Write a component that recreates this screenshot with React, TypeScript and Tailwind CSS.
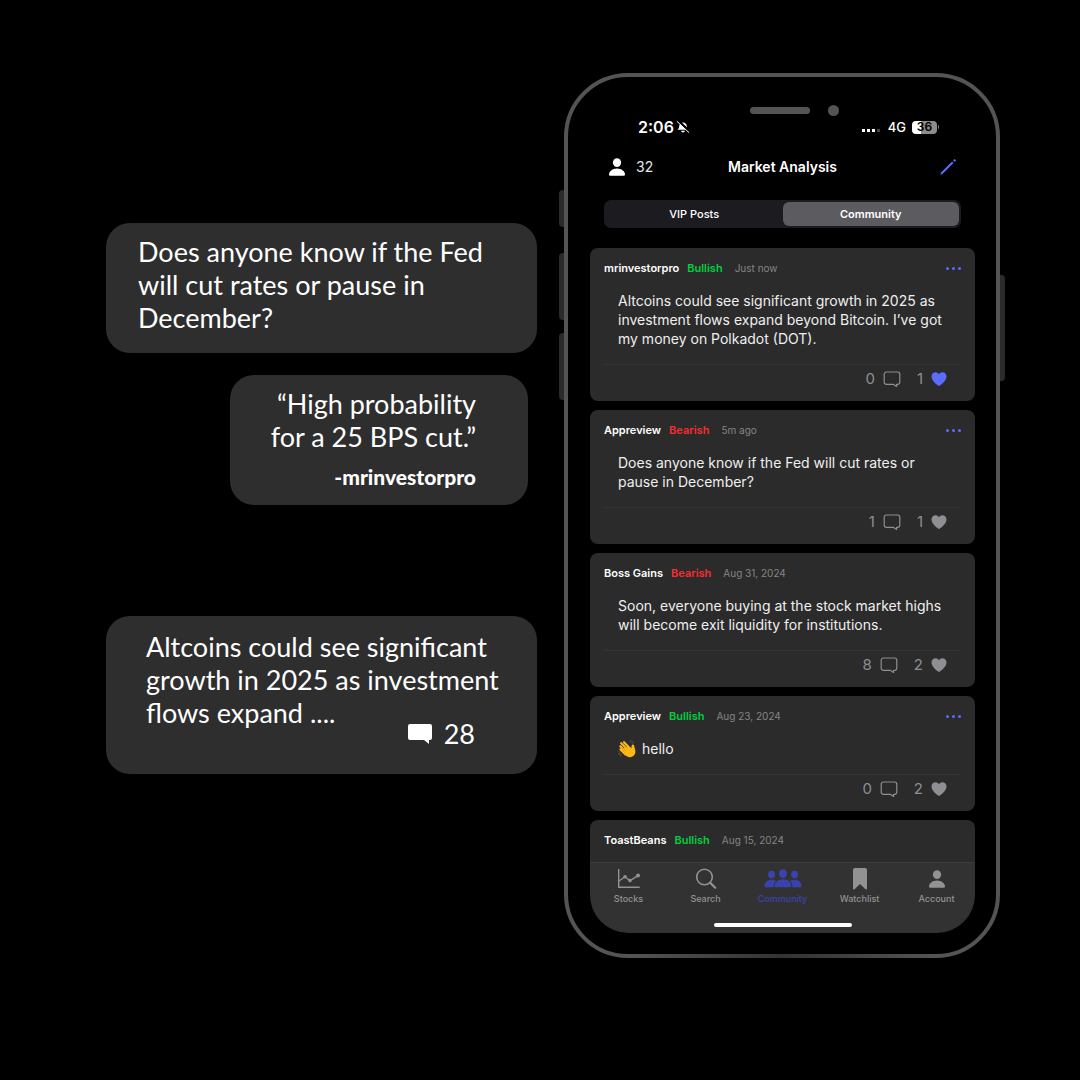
import React from "react";

type Mood = "Bullish" | "Bearish";

interface Post {
  author: string;
  mood: Mood;
  when: string;
  lines: string[];
  comments: number;
  likes: number;
  liked?: boolean;
  menu?: boolean;
  wave?: boolean;
}

const posts: Post[] = [
  {
    author: "mrinvestorpro",
    mood: "Bullish",
    when: "Just now",
    lines: [
      "Altcoins could see significant growth in 2025 as",
      "investment flows expand beyond Bitcoin. I’ve got",
      "my money on Polkadot (DOT).",
    ],
    comments: 0,
    likes: 1,
    liked: true,
    menu: true,
  },
  {
    author: "Appreview",
    mood: "Bearish",
    when: "5m ago",
    lines: ["Does anyone know if the Fed will cut rates or", "pause in December?"],
    comments: 1,
    likes: 1,
    menu: true,
  },
  {
    author: "Boss Gains",
    mood: "Bearish",
    when: "Aug 31, 2024",
    lines: ["Soon, everyone buying at the stock market highs", "will become exit liquidity for institutions."],
    comments: 8,
    likes: 2,
  },
  {
    author: "Appreview",
    mood: "Bullish",
    when: "Aug 23, 2024",
    lines: ["hello"],
    comments: 0,
    likes: 2,
    menu: true,
    wave: true,
  },
];

function PersonIcon({ className }: { className?: string }) {
  return (
    <svg viewBox="0 0 18 18" className={className} fill="currentColor" aria-hidden="true">
      <ellipse cx="9" cy="4.6" rx="4.1" ry="4.4" />
      <path d="M1 16.6C1 13.6 4.4 10.6 9 10.6s8 3 8 6c0 .8-.5 1.2-1.3 1.2H2.3C1.500 17.800 1 17.400 1 16.600Z" />
    </svg>
  );
}

function BubbleIcon() {
  return (
    <svg viewBox="0 0 18 16" className="h-4 w-[18px]" fill="none" stroke="currentColor" strokeWidth="1.2" strokeLinejoin="round" aria-hidden="true">
      <path d="M3.400 1h11.200A2.200 2.200 0 0 1 16.800 3.200v8a2.200 2.200 0 0 1-2.200 2.200h-1v2l-3-2H3.400a2.200 2.200 0 0 1-2.200-2.200V3.200A2.200 2.200 0 0 1 3.400 1Z" />
    </svg>
  );
}

function HeartIcon() {
  return (
    <svg viewBox="0 0 16 14" className="h-3.5 w-4" fill="currentColor" aria-hidden="true">
      <path d="M8 14C7.300 14 .5 9.400.5 4.600.5 2 2.300.2 4.500.2 6 .2 7.300 1 8 2.300 8.700 1 10 .2 11.500.2c2.200 0 4 1.800 4 4.400C15.500 9.400 8.700 14 8 14Z" />
    </svg>
  );
}

function WaveIcon() {
  return (
    <svg viewBox="0 0 18 18" className="h-[18px] w-[18px]" role="img" aria-label="Waving hand">
      <g fill="none" stroke="#545454" strokeLinecap="round" strokeWidth="0.9">
        <path d="M12 1.400c1.200.4 2 1.100 2.500 2.100M13 .4c1.200.4 2.200 1.200 2.700 2.300M1 11.500c.3 1.500 1.300 2.700 2.700 3.400M.4 13.300c.5 1.300 1.300 2.200 2.500 2.800" />
      </g>
      <g stroke="#fdb913" strokeLinecap="round" strokeWidth="2.200">
        <path d="M3.200 3.200 9.500 9.500M6 2.200l6 6.300M2.300 6.300l6 6M2.500 9.400l5 5" />
      </g>
      <path d="M6 7.500 11.800 7l1.400 1.400c.4-1 .2-2.300.7-3.300.4-.9 1.900-.8 2.100.2.3 1.600 1.600 4.700 1.400 6.800-.2 3-2.600 5.200-5.400 5.200-2.400 0-4-1.700-5.500-3.200Z" fill="#fdb913" />
      <path d="m5 4.500 4.300 4.400M4 7.400l4 4M4.200 10.400l3 3" stroke="#d18407" strokeWidth="0.500" />
    </svg>
  );
}

function PostHeader({ author, mood, when, menu }: { author: string; mood: Mood; when: string; menu?: boolean }) {
  return (
    <header className="flex h-4 items-center text-[11px] leading-4 font-semibold">
      <strong className="font-semibold text-white">{author}</strong>
      <span className={mood === "Bullish" ? "ml-2 text-[#00d03f]" : "ml-2 text-[#fb2c2f]"}>{mood}</span>
      <time className="ml-3 text-[10px] font-normal text-[#858585]">{when}</time>
      {menu && (
        <button type="button" aria-label="Post options" className="ml-auto flex gap-[3px] text-[#5b6cff]">
          <i className="size-[3px] rounded-full bg-current" />
          <i className="size-[3px] rounded-full bg-current" />
          <i className="size-[3px] rounded-full bg-current" />
        </button>
      )}
    </header>
  );
}

function PostCard({ post }: { post: Post }) {
  return (
    <article className="rounded-lg bg-[#2b2b2b] px-3.5 pt-3 pb-3.5">
      <PostHeader author={post.author} mood={post.mood} when={post.when} menu={post.menu} />
      <p className="mt-[15px] pl-3.5 text-sm leading-[19px] whitespace-nowrap text-[#efefef]">
        {post.wave ? (
          <span className="flex items-center gap-1.5">
            <WaveIcon />
            {post.lines[0]}
          </span>
        ) : (
          post.lines.map((line) => (
            <span key={line} className="block">
              {line}
            </span>
          ))
        )}
      </p>
      <footer className="mt-4 flex items-center justify-end border-t border-[#343434] pt-1.5 pr-3.5 text-[15px] leading-4 text-[#8e8e93]">
        <button type="button" aria-label="Comments" className="flex h-4 items-center gap-2">
          {post.comments}
          <BubbleIcon />
        </button>
        <button type="button" aria-label="Likes" className="ml-4 flex h-4 items-center gap-2">
          {post.likes}
          <span className={post.liked ? "text-[#5b6cff]" : ""}>
            <HeartIcon />
          </span>
        </button>
      </footer>
    </article>
  );
}

function StatusBar() {
  return (
    <div className="flex h-5 items-center pr-9 pl-12 text-white">
      <span className="text-base leading-5 font-semibold">2:06</span>
      <svg viewBox="0 0 14 14" className="ml-0.5 size-3.5" aria-label="Silent mode">
        <path d="M1.500 9.800c1.300-1 1.500-2 1.700-3.600C3.500 3.900 5 2.600 7 2.600s3.500 1.300 3.800 3.600c.2 1.600.4 2.600 1.700 3.600Z" fill="#fff" />
        <path d="M5 10.700h4c-.3 1.100-1.100 1.700-2 1.700s-1.700-.6-2-1.700Z" fill="#fff" />
        <path d="m2 .5 12 11.500" stroke="#000" strokeWidth="2.500" />
        <path d="m.8 1.200 12.400 11.600" stroke="#fff" strokeWidth="1" />
      </svg>
      <span className="mb-[5px] ml-auto flex gap-0.5 self-end">
        <i className="size-[3px] bg-white" />
        <i className="size-[3px] bg-white" />
        <i className="size-[3px] bg-white" />
        <i className="size-[3px] bg-[#444]" />
      </span>
      <span className="ml-2 text-[13px] leading-5 font-medium">4G</span>
      <span className="ml-1.5 flex h-[13px] w-[25px] items-center justify-center rounded-sm bg-linear-to-r from-white from-36% to-[#8c8c8c] to-36% text-xs font-semibold text-black">
        36
      </span>
      <i className="ml-px h-1 w-px rounded-r bg-[#7c7c7c]" />
    </div>
  );
}

function StocksIcon() {
  return (
    <svg viewBox="0 0 24 22" className="h-[22px] w-6" fill="none" stroke="currentColor" strokeWidth="1.400" aria-hidden="true">
      <path d="M1.700 1v18.200h21M2 13l6-4.200 5 3.900 8-5" />
      <g fill="currentColor" stroke="none">
        <circle cx="8" cy="8.800" r="1.800" />
        <circle cx="13" cy="12.600" r="1.800" />
        <circle cx="21" cy="7.600" r="2" />
      </g>
    </svg>
  );
}

function SearchIcon() {
  return (
    <svg viewBox="0 0 22 22" className="size-[22px]" fill="none" stroke="currentColor" strokeLinecap="round" aria-hidden="true">
      <circle cx="9.500" cy="9" r="7.800" strokeWidth="1.600" />
      <path d="m15.200 14.700 5 5" strokeWidth="2.200" />
    </svg>
  );
}

function CommunityIcon() {
  return (
    <svg viewBox="0 0 38 22" className="h-[22px] w-[38px]" fill="currentColor" aria-hidden="true">
      <ellipse cx="7.500" cy="6.500" rx="3.500" ry="3.800" />
      <ellipse cx="30.500" cy="6.500" rx="3.500" ry="3.800" />
      <ellipse cx="19" cy="5.600" rx="4" ry="4.300" />
      <path d="M.5 18c0-3.600 3-6.300 7-6.300 1.900 0 3.400.5 4.600 1.400-1.900 1.500-2.800 3.600-2.400 6.100h-8C.9 19.200.5 18.800.5 18ZM37.500 18c0-3.600-3-6.300-7-6.300-1.900 0-3.400.5-4.600 1.400 1.900 1.500 2.800 3.600 2.400 6.100h8c.8 0 1.200-.4 1.200-1.200ZM10.700 17.900c0-3.700 3.500-6.600 8.300-6.600s8.300 2.900 8.300 6.600c0 .9-.4 1.300-1.300 1.300H12c-.9 0-1.300-.4-1.300-1.300Z" />
    </svg>
  );
}

function BookmarkIcon() {
  return (
    <svg viewBox="0 0 16 22" className="h-[22px] w-4" fill="currentColor" aria-hidden="true">
      <path d="M3 0h10a2 2 0 0 1 2 2v18.600c0 1.100-.8 1.300-1.500.6L8 16l-5.500 5.200c-.7.7-1.500.5-1.500-.6V2a2 2 0 0 1 2-2Z" />
    </svg>
  );
}

const tabs = [
  { label: "Stocks", icon: <StocksIcon /> },
  { label: "Search", icon: <SearchIcon /> },
  { label: "Community", icon: <CommunityIcon />, active: true },
  { label: "Watchlist", icon: <BookmarkIcon /> },
  { label: "Account", icon: <PersonIcon className="size-[18px]" /> },
];

function Phone() {
  return (
    <div className="relative w-[436px] shrink-0 font-[Inter,sans-serif]">
      <i className="absolute top-[117px] -left-[5px] h-[37px] w-[5px] rounded-l bg-[#2b2b2b]" />
      <i className="absolute top-[180px] -left-[5px] h-[67px] w-[5px] rounded-l bg-[#2b2b2b]" />
      <i className="absolute top-[260px] -left-[5px] h-[67px] w-[5px] rounded-l bg-[#2b2b2b]" />
      <i className="absolute top-[202px] -right-[5px] h-[106px] w-[5px] rounded-r bg-[#2b2b2b]" />
      <div className="rounded-[64px] border-4 border-[#545454] pt-[27px] pr-[21px] pb-[21px] pl-[22px]">
        <div className="flex h-3 items-center pl-40">
          <i className="h-[7px] w-[60px] rounded-full bg-[#545454]" />
          <i className="ml-[18px] size-[11px] rounded-full bg-[#545454]" />
        </div>
        <div className="mt-px">
          <StatusBar />
        </div>
        <div className="mt-5 grid h-5 grid-cols-3 items-center px-[18px] text-sm leading-5 text-[#e6e6e6]">
          <span className="flex items-center gap-2.5">
            <PersonIcon className="size-[18px] text-white" />
            32
          </span>
          <h1 className="text-center font-semibold whitespace-nowrap text-white">Market Analysis</h1>
          <button type="button" aria-label="Write a post" className="ml-auto text-[#5b6cff]">
            <svg viewBox="0 0 18 18" className="size-[18px]" fill="none" stroke="currentColor" strokeWidth="2" aria-hidden="true">
              <path d="M2.200 15.800 13.800 4.200M14.800 3.200 16.400 1.600" />
              <path d="m1.600 16.400 1-.3" strokeWidth="1" />
            </svg>
          </button>
        </div>
        <div className="mx-3.5 mt-[23px] grid h-7 grid-cols-2 rounded-[7px] bg-[#1c1b20] p-0.5 text-[11px] text-white">
          <button type="button" className="font-medium">VIP Posts</button>
          <button type="button" aria-pressed="true" className="rounded-md bg-[#5c5b60] font-semibold">Community</button>
        </div>
        <div className="mt-5 overflow-hidden rounded-b-[38px]">
          <div className="flex flex-col gap-[9px]">
            {posts.map((post, i) => (
              <PostCard key={i} post={post} />
            ))}
            <article className="rounded-t-lg bg-[#2b2b2b] px-3.5 pt-3 pb-3.5">
              <PostHeader author="ToastBeans" mood="Bullish" when="Aug 15, 2024" />
            </article>
          </div>
          <nav className="border-t border-[#3b3b3b] bg-[#323232] pt-1 pb-1.5">
            <div className="grid grid-cols-5">
              {tabs.map((tab) => (
                <a
                  key={tab.label}
                  href="#"
                  className={
                    tab.active
                      ? "flex flex-col items-center text-[9px] leading-3 font-medium text-[#3a42b0]"
                      : "flex flex-col items-center text-[9px] leading-3 font-medium text-[#929292]"
                  }
                >
                  <span className="flex h-6 items-center">{tab.icon}</span>
                  <span className="mt-0.5">{tab.label}</span>
                </a>
              ))}
            </div>
            <div className="mx-auto mt-[18px] h-1 w-[138px] rounded-full bg-white" />
          </nav>
        </div>
      </div>
      <i className="absolute inset-x-16 bottom-0 h-1 bg-linear-to-r from-[#545454] via-[#333] to-[#545454]" />
    </div>
  );
}

export default function App() {
  return (
    <main className="flex min-h-screen items-start justify-center gap-[27px] bg-black pt-[73px] pl-[26px]">
      <div className="flex w-[431px] shrink-0 flex-col pt-[150px] font-[Lato,sans-serif] text-[27px] leading-[33px] text-white">
        <section className="rounded-3xl bg-[#2e2e2e] px-8 pt-3 pb-[19px]">
          <p className="whitespace-nowrap">
            Does anyone know if the Fed
            <br />
            will cut rates or pause in
            <br />
            December?
          </p>
        </section>
        <section className="mt-[22px] mr-[9px] ml-[124px] rounded-3xl bg-[#2e2e2e] pt-3 pr-[52px] pb-3.5 text-right">
          <p>
            “High probability
            <br />
            for a 25 BPS cut.”
          </p>
          <p className="mt-2.5 text-[21px] leading-7 font-black">-mrinvestorpro</p>
        </section>
        <section className="mt-[111px] rounded-3xl bg-[#2e2e2e] pt-3.5 pr-[62px] pb-6 pl-10">
          <p className="whitespace-nowrap">
            Altcoins could see significant
            <br />
            growth in 2025 as investment
            <br />
            flows expand ....
          </p>
          <p className="-mt-3 flex items-center justify-end gap-3">
            <svg viewBox="0 0 24 20" className="h-5 w-6" fill="currentColor" aria-label="Comments">
              <path d="M2 0h20a2 2 0 0 1 2 2v12a2 2 0 0 1-2 2h-1v4l-5-4H2a2 2 0 0 1-2-2V2a2 2 0 0 1 2-2Z" />
            </svg>
            28
          </p>
        </section>
      </div>
      <Phone />
    </main>
  );
}
